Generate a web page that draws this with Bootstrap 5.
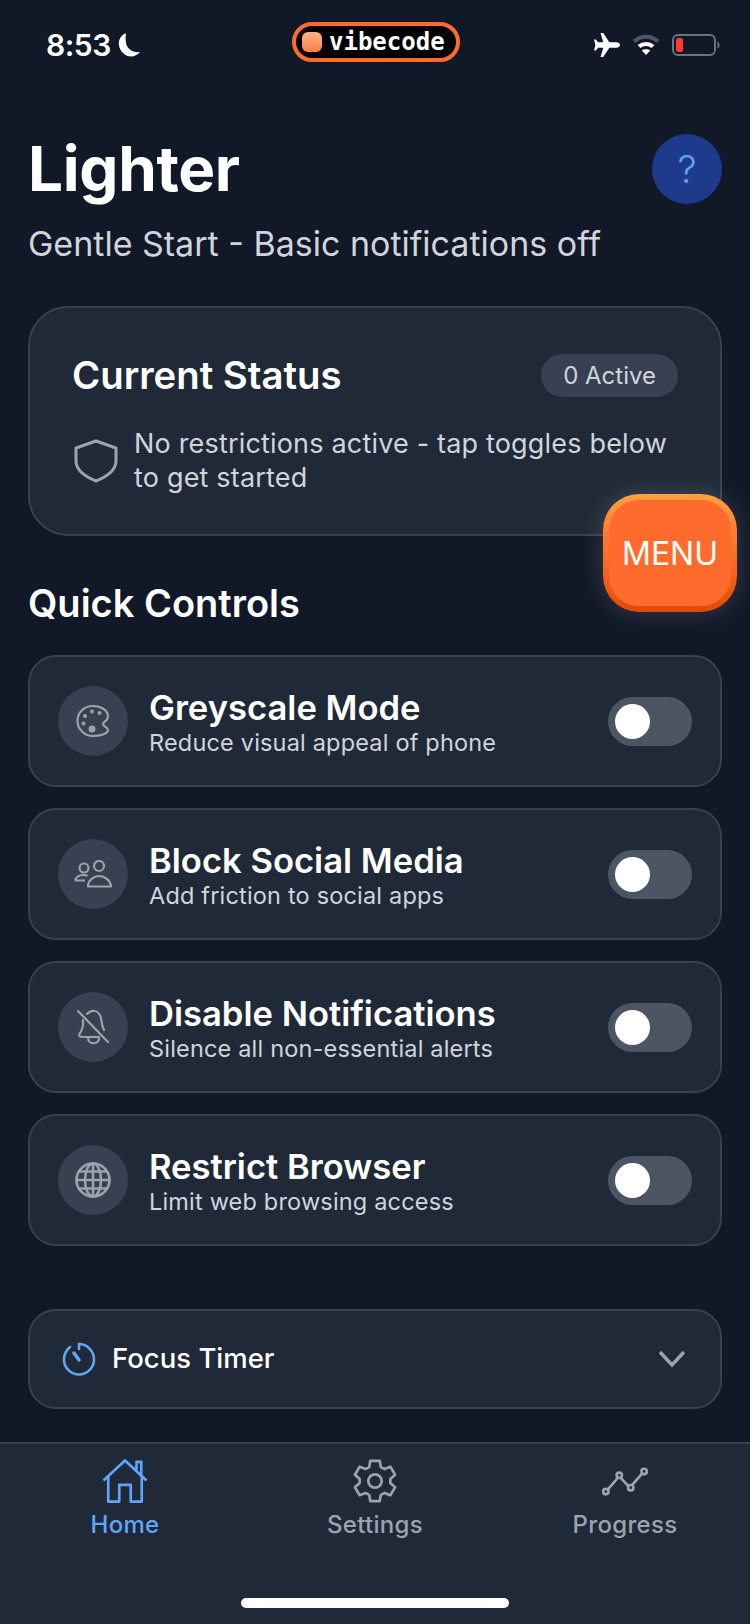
<!DOCTYPE html>
<html>
<head>
    <meta charset="UTF-8">
    <title>Lighter</title>
    <link href="https://cdn.jsdelivr.net/npm/bootstrap@5.3.2/dist/css/bootstrap.min.css" rel="stylesheet">
    <style>
        html, body { height: 1624px; }
        body {
            width: 750px;
            background-color: #111827;
            color: #fff;
            font-family: "Inter", "Liberation Sans", sans-serif;
            overflow: hidden;
            position: relative;
        }
        .app-frame { height: 1624px; }
        .status-bar { height: 90px; padding: 22px 30px 0 46px; }
        .status-left { width: 200px; height: 44px; padding-top: 1px; gap: 6px; }
        .status-right { width: 214px; height: 44px; padding-top: 1px; }
        .status-time { font-size: 30px; font-weight: 600; line-height: 44px; letter-spacing: -0.5px; }
        .vibe-pill {
            height: 40px;
            width: 168px;
            background: #000;
            border: 4px solid #ff6b2c;
            border-radius: 20px;
            padding-left: 6px;
            gap: 7px;
            font-family: "DejaVu Sans Mono", monospace;
            font-weight: 700;
            font-size: 24px;
            line-height: 1;
        }
        .vibe-dot {
            width: 20px;
            height: 20px;
            border-radius: 6px;
            background: linear-gradient(180deg, #ffb184, #ff7f45);
        }
        .page-head { padding: 44px 28px 0; }
        .app-title { font-size: 62px; font-weight: 700; line-height: 70px; letter-spacing: -0.3px; margin: 0; }
        .app-sub { font-size: 34px; line-height: 44px; color: #d1d5db; margin: 18px 0 0; }
        .help-btn {
            width: 70px;
            height: 70px;
            background: #1e3a8a;
            color: #60a5fa;
            font-size: 38px;
            font-weight: 300;
            line-height: 1;
        }
        .dark-card {
            background-color: #1f2937;
            border: 2px solid #374151;
            color: #fff;
        }
        .status-card { margin: 40px 28px 0; height: 230px; border-radius: 40px; padding: 45px 42px 0; }
        .status-title { font-size: 38.3px; font-weight: 600; line-height: 44px; margin: 0; }
        .count-pill {
            background: #374151;
            color: #d1d5db;
            font-size: 24px;
            line-height: 44px;
            height: 43px;
            padding: 0 22px;
            border-radius: 22px;
        }
        .status-note { font-size: 27px; line-height: 34px; color: #d1d5db; margin: 0; letter-spacing: 0.18px; }
        .status-row { margin-top: 30px; gap: 16px; }
        .status-shield { margin-left: 2px; flex: none; }
        .section-title { font-size: 38px; font-weight: 600; line-height: 48px; margin: 43px 28px 28px; }
        .control-list { padding: 0 28px; gap: 21px; }
        .control-row { height: 132px; border-radius: 28px; padding: 0 28px; }
        .control-icon { width: 70px; height: 70px; background: #374151; flex: none; }
        .control-text { margin-left: 21px; padding-top: 3px; }
        .control-name { font-size: 34.6px; font-weight: 600; line-height: 41px; }
        .control-desc { font-size: 23.5px; line-height: 30px; color: #d1d5db; letter-spacing: 0.18px; }
        .toggle-track { width: 84px; height: 49px; border-radius: 25px; background: #4b5563; padding-left: 7px; }
        .toggle-knob { width: 35px; height: 35px; background: #fff; }
        .timer-card { margin: 63px 28px 0; height: 100px; border-radius: 28px; padding: 0 34px 0 32px; }
        .timer-label { font-size: 27.5px; font-weight: 500; margin-left: 16px; }
        .tab-bar {
            height: 182px;
            background: #1f2937;
            border-top: 2px solid #374151;
            padding: 15px 0 0;
        }
        .tab-item { width: 250px; color: #9ca3af; font-size: 24px; line-height: 30px; letter-spacing: 0.3px; font-weight: 500; }
        .tab-item.is-active { color: #60a5fa; }
        .tab-label { margin-top: 7px; }
        .home-bar { width: 268px; height: 10px; border-radius: 5px; background: #fff; position: absolute; left: 241px; top: 1598px; }
        .menu-fab {
            position: absolute;
            left: 603px;
            top: 494px;
            width: 134px;
            height: 118px;
            border-radius: 36px;
            padding: 6px;
            background: linear-gradient(180deg, #ffa23f 0%, #ff7a2e 35%, #f4601c 70%, #e04a08 100%);
            box-shadow: 0 0 26px rgba(255, 255, 255, 0.16);
        }
        .menu-face {
            height: 100%;
            border-radius: 30px;
            background: #ff6b2c;
            color: #fff;
            font-size: 32px;
            padding-top: 2px;
        }
    </style>
</head>
<body>

<div class="app-frame d-flex flex-column">
    <!-- status bar -->
    <div class="status-bar d-flex justify-content-between align-items-start">
        <div class="status-left d-flex align-items-center">
            <span class="status-time">8:53</span>
            <svg width="24" height="26" viewBox="0 0 24 26"><path d="M9 1C4 3 1 8 2 13.500C3 20 9 25 15 24.500C18 24.300 21 22.500 23 20C16 21 10 17 9 11C8.500 7.500 8.500 4 9 1Z" fill="#fff"/></svg>
        </div>
        <div class="vibe-pill d-flex align-items-center">
            <span class="vibe-dot"></span>
            <span>vibecode</span>
        </div>
        <div class="status-right d-flex align-items-center justify-content-end gap-2">
            <svg width="26" height="26" viewBox="0 0 28 26"><path d="M7 0L10 0L16.500 10L24 10C26.500 10 28 11.500 28 13C28 14.500 26.500 16 24 16L16.500 16L10 26L7 26L10 16L4.500 16L2 19L0 19L1.500 13L0 7L2 7L4.500 10L10 10Z" fill="#fff"/></svg>
            <svg class="ms-1" width="28" height="22" viewBox="0 0 28 22" fill="none"><path d="M2 7.500C9 1 19 1 26 7.500" stroke="#4b5563" stroke-width="4"/><path d="M7 12.500C11 9 17 9 21 12.500" stroke="#fff" stroke-width="4"/><path d="M14 21L9.800 16.500C12 14.700 16 14.700 18.200 16.500Z" fill="#fff"/></svg>
            <svg class="ms-1" width="48" height="24" viewBox="0 0 48 24" fill="none"><rect x="1" y="2" width="42" height="20" rx="5" stroke="#6b7280" stroke-width="2"/><rect x="4" y="5" width="7" height="14" rx="2.500" fill="#ff3b30"/><path d="M45.500 8.500C47 9 47.500 10.500 47.500 12C47.500 13.500 47 15 45.500 15.500Z" fill="#6b7280"/></svg>
        </div>
    </div>

    <!-- header -->
    <div class="page-head">
        <div class="d-flex justify-content-between align-items-start">
            <h1 class="app-title">Lighter</h1>
            <div class="help-btn rounded-circle d-flex align-items-center justify-content-center">?</div>
        </div>
        <p class="app-sub">Gentle Start - Basic notifications off</p>
    </div>

    <!-- current status -->
    <div class="card dark-card status-card">
        <div class="d-flex justify-content-between align-items-center">
            <h2 class="status-title">Current Status</h2>
            <span class="count-pill">0 Active</span>
        </div>
        <div class="status-row d-flex align-items-center">
            <svg class="status-shield" width="44" height="44" viewBox="0 0 44 44" fill="none"><path d="M22 2L42 9V22C42 31 32 38 22 42C12 38 2 31 2 22V9Z" stroke="#9ca3af" stroke-width="3" stroke-linejoin="round"/></svg>
            <p class="status-note">No restrictions active - tap toggles below to get started</p>
        </div>
    </div>

    <h2 class="section-title">Quick Controls</h2>

    <div class="control-list d-flex flex-column">
        <div class="card dark-card control-row flex-row align-items-center">
            <div class="control-icon rounded-circle d-flex align-items-center justify-content-center">
                <svg width="34" height="34" viewBox="0 0 34 34" fill="none"><path d="M17 2C8 2 1.500 8.500 1.500 17C1.500 25.500 9 32 17 32C23 32 32 30 32 26C32 23 27 23 27 20C27 17.500 32 17 32 12.500C32 6 25 2 17 2Z" stroke="#9ca3af" stroke-width="2.200"/><circle cx="9" cy="12" r="2" fill="#9ca3af"/><circle cx="16" cy="7.500" r="2" fill="#9ca3af"/><circle cx="23.500" cy="9" r="2" fill="#9ca3af"/><circle cx="7.500" cy="19.500" r="2" fill="#9ca3af"/><circle cx="16" cy="25" r="3.500" fill="#9ca3af"/></svg>
            </div>
            <div class="control-text flex-grow-1">
                <div class="control-name">Greyscale Mode</div>
                <div class="control-desc">Reduce visual appeal of phone</div>
            </div>
            <div class="toggle-track d-flex align-items-center"><div class="toggle-knob rounded-circle"></div></div>
        </div>
        <div class="card dark-card control-row flex-row align-items-center">
            <div class="control-icon rounded-circle d-flex align-items-center justify-content-center">
                <svg width="38" height="28" viewBox="0 0 38 28" fill="none" stroke="#9ca3af" stroke-width="2.200"><circle cx="10" cy="8" r="4.500"/><circle cx="25" cy="6" r="5"/><path d="M1 20.500C2 16.500 6 15 9.500 15C11 15 12.500 15.300 13.500 16M1 20.500H11"/><path d="M14 26.500C14 20 20 16 25 16C30.500 16 36.500 20 37 26.500Z" stroke-linejoin="round"/></svg>
            </div>
            <div class="control-text flex-grow-1">
                <div class="control-name">Block Social Media</div>
                <div class="control-desc">Add friction to social apps</div>
            </div>
            <div class="toggle-track d-flex align-items-center"><div class="toggle-knob rounded-circle"></div></div>
        </div>
        <div class="card dark-card control-row flex-row align-items-center">
            <div class="control-icon rounded-circle d-flex align-items-center justify-content-center">
                <svg width="34" height="36" viewBox="0 0 34 36" fill="none" stroke="#9ca3af" stroke-width="2.200" stroke-linecap="round" stroke-linejoin="round"><path d="M2 2L32 33"/><path d="M11 5C13 3 15 1.500 18 2C21 2 24 5 25 9C25.500 13 26 17 28 21"/><path d="M7 11C7.500 15 7 20 3.500 25C2.500 27 4 28 6 28H23"/><path d="M12 29C12 36 23 36 23 29"/></svg>
            </div>
            <div class="control-text flex-grow-1">
                <div class="control-name">Disable Notifications</div>
                <div class="control-desc">Silence all non-essential alerts</div>
            </div>
            <div class="toggle-track d-flex align-items-center"><div class="toggle-knob rounded-circle"></div></div>
        </div>
        <div class="card dark-card control-row flex-row align-items-center">
            <div class="control-icon rounded-circle d-flex align-items-center justify-content-center">
                <svg width="36" height="36" viewBox="0 0 36 36" fill="none" stroke="#9ca3af" stroke-width="2.600"><circle cx="18" cy="18" r="16.500"/><ellipse cx="18" cy="18" rx="8" ry="16.500"/><path d="M18 1.500V34.500M1.500 18H34.500M4 9.500H32M4 26.500H32"/></svg>
            </div>
            <div class="control-text flex-grow-1">
                <div class="control-name">Restrict Browser</div>
                <div class="control-desc">Limit web browsing access</div>
            </div>
            <div class="toggle-track d-flex align-items-center"><div class="toggle-knob rounded-circle"></div></div>
        </div>
    </div>

    <div class="card dark-card timer-card flex-row align-items-center">
        <svg width="34" height="34" viewBox="0 0 34 34" fill="none" stroke="#60a5fa" stroke-width="2.600" stroke-linecap="round"><path d="M17 2C25 2 32 9 32 17.500C32 26 25 32.500 17 32.500C9 32.500 2 26 2 17.500C2 12 4.500 8 8 5"/><path d="M17 2V7"/><path d="M12 11L17 18" stroke-width="3.500"/></svg>
        <span class="timer-label flex-grow-1">Focus Timer</span>
        <svg width="28" height="18" viewBox="0 0 28 18" fill="none"><path d="M2 2L14 15L26 2" stroke="#9ca3af" stroke-width="3.500"/></svg>
    </div>

    <!-- tab bar -->
    <div class="tab-bar mt-auto d-flex justify-content-center">
        <div class="tab-item is-active d-flex flex-column align-items-center">
            <svg width="46" height="44" viewBox="0 0 48 46" fill="none" stroke="#60a5fa" stroke-width="2.800" stroke-linejoin="round"><path d="M1.500 22.500L24 1.500L46.500 22.500M36 12V3H41V17"/><path d="M6.500 18.500V44.500H18V27H30V44.500H41.500V18.500"/></svg>
            <span class="tab-label">Home</span>
        </div>
        <div class="tab-item d-flex flex-column align-items-center">
            <svg width="44" height="44" viewBox="0 0 46 46" fill="none" stroke="#9ca3af" stroke-width="2.800" stroke-linejoin="round"><circle cx="23" cy="23" r="7"/><path d="M18 2H28L29 8.500L33 10.500L39 8L44 16.500L39 21V25L44 29.500L39 38L33 35.500L29 37.500L28 44H18L17 37.500L13 35.500L7 38L2 29.500L7 25V21L2 16.500L7 8L13 10.500L17 8.500Z"/></svg>
            <span class="tab-label">Settings</span>
        </div>
        <div class="tab-item d-flex flex-column align-items-center">
            <svg width="46" height="44" viewBox="0 0 48 46" fill="none" stroke="#9ca3af" stroke-width="2.800"><path d="M5 33L18 18L29 30L43 14"/><circle cx="4" cy="34" r="2.800" fill="#1f2937"/><circle cx="18" cy="17" r="2.800" fill="#1f2937"/><circle cx="30" cy="30" r="2.800" fill="#1f2937"/><circle cx="44" cy="13" r="2.800" fill="#1f2937"/></svg>
            <span class="tab-label">Progress</span>
        </div>
    </div>
</div>

<div class="menu-fab"><div class="menu-face d-flex align-items-center justify-content-center">MENU</div></div>
<div class="home-bar"></div>

<script src="https://cdn.jsdelivr.net/npm/bootstrap@5.3.2/dist/js/bootstrap.bundle.min.js"></script>
</body>
</html>
